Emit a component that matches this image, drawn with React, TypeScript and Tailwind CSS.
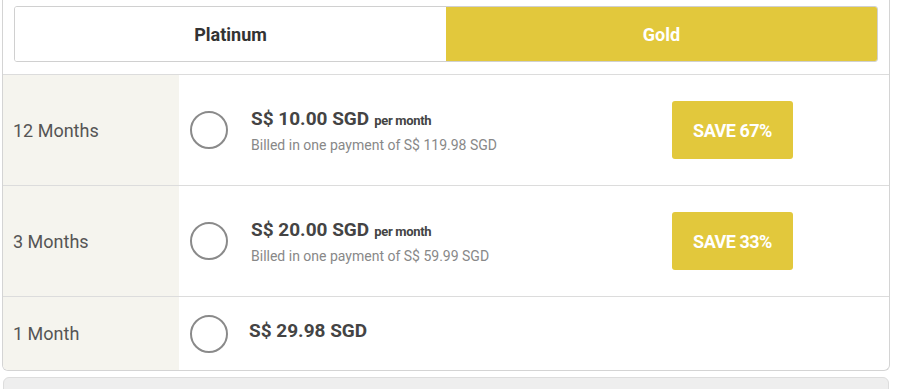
import React from 'react';

const plans = [
  { label: '12 Months', price: 'S$ 10.00 SGD', per: true, billed: 'Billed in one payment of S$ 119.98 SGD', save: 'SAVE 67%' },
  { label: '3 Months', price: 'S$ 20.00 SGD', per: true, billed: 'Billed in one payment of S$ 59.99 SGD', save: 'SAVE 33%' },
  { label: '1 Month', price: 'S$ 29.98 SGD', per: false, billed: '', save: '' },
];

const App: React.FC = () => {
  return (
    <div className="w-[900px] h-[389px] overflow-hidden bg-white font-['Roboto','Liberation_Sans',sans-serif]">
      <div className="ml-[2px] w-[888px] border-x border-b border-[#d4d4d4] rounded-b-[6px] overflow-hidden">
        {/* Tabs */}
        <div className="px-[11px] pt-[6px] pb-[12px] border-b border-[#dcdcdc]">
          <div className="flex h-[56px] rounded-[3px] border border-[#d0d0d0] overflow-hidden">
            <button className="flex-1 bg-white text-[#333] font-bold text-[18px]">Platinum</button>
            <button className="flex-1 bg-[#e2c83c] text-white font-bold text-[18px]">Gold</button>
          </div>
        </div>

        {plans.map((p, i) => (
          <div
            key={p.label}
            className={`flex ${i < plans.length - 1 ? 'h-[111px] border-b border-[#dcdcdc]' : 'h-[73px]'}`}
          >
            <div className="w-[176px] shrink-0 bg-[#f5f4ee] flex items-center pl-[10px] text-[18px] text-[#555]">
              {p.label}
            </div>
            <div className="flex-1 flex items-center pl-[11px]">
              <div className="w-[38px] h-[38px] rounded-full border-2 border-[#8a8a8a] shrink-0" />
              <div className={`${p.per ? 'ml-[23px] mt-[4px]' : 'ml-[21px] -mt-[6px]'} w-[421px]`}>
                <div className="text-[#444] font-bold text-[19px] leading-[22px]">
                  {p.price}
                  {p.per && <span className="text-[13px] tracking-[-0.3px] ml-[5px]">per month</span>}
                </div>
                {p.billed && <div className="text-[14px] text-[#888] mt-[3px]">{p.billed}</div>}
              </div>
              {p.save && (
                <div className="w-[121px] h-[58px] rounded-[3px] bg-[#e2c83c] text-white font-bold text-[18px] tracking-[-0.5px] flex items-center justify-center">
                  {p.save}
                </div>
              )}
            </div>
          </div>
        ))}
      </div>
      <div className="ml-[3px] mt-[6px] w-[886px] h-[20px] bg-[#eeeeee] border border-[#dddddd] rounded-t-[6px]" />
    </div>
  );
};

export default App;
